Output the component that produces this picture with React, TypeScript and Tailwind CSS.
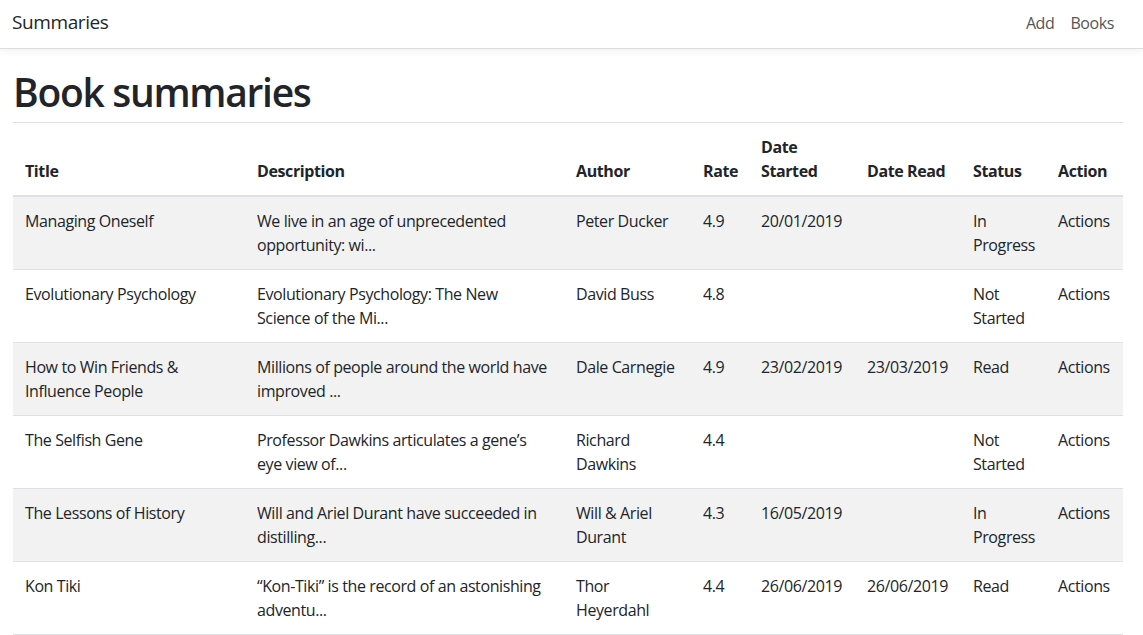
import React from "react";

type Book = {
  title: string;
  description: string;
  author: string;
  rate: string;
  dateStarted: string;
  dateRead: string;
  status: string;
};

const books: Book[] = [
  {
    title: "Managing Oneself",
    description: "We live in an age of unprecedented opportunity: wi...",
    author: "Peter Ducker",
    rate: "4.9",
    dateStarted: "20/01/2019",
    dateRead: "",
    status: "In Progress",
  },
  {
    title: "Evolutionary Psychology",
    description: "Evolutionary Psychology: The New Science of the Mi...",
    author: "David Buss",
    rate: "4.8",
    dateStarted: "",
    dateRead: "",
    status: "Not Started",
  },
  {
    title: "How to Win Friends & Influence People",
    description: "Millions of people around the world have improved ...",
    author: "Dale Carnegie",
    rate: "4.9",
    dateStarted: "23/02/2019",
    dateRead: "23/03/2019",
    status: "Read",
  },
  {
    title: "The Selfish Gene",
    description: "Professor Dawkins articulates a gene\u2019s eye view of...",
    author: "Richard Dawkins",
    rate: "4.4",
    dateStarted: "",
    dateRead: "",
    status: "Not Started",
  },
  {
    title: "The Lessons of History",
    description: "Will and Ariel Durant have succeeded in distilling...",
    author: "Will & Ariel Durant",
    rate: "4.3",
    dateStarted: "16/05/2019",
    dateRead: "",
    status: "In Progress",
  },
  {
    title: "Kon Tiki",
    description: "\u201cKon-Tiki\u201d is the record of an astonishing adventu...",
    author: "Thor Heyerdahl",
    rate: "4.4",
    dateStarted: "26/06/2019",
    dateRead: "26/06/2019",
    status: "Read",
  },
];

const App: React.FC = () => {
  return (
    <div className="min-h-screen bg-white text-[#212529] font-['Open_Sans',sans-serif] text-[16px] leading-6 tracking-[-0.4px]">
      <nav className="h-[49px] flex items-center justify-between pl-3 pr-[29px] pb-[3px] border-b border-[#dcdcdc] shadow-[0_2px_8px_rgba(0,0,0,0.06)]">
        <a className="text-[19px] text-[#212529] leading-none">Summaries</a>
        <div className="flex gap-4 text-[#555]">
          <a>Add</a>
          <a>Books</a>
        </div>
      </nav>

      <div className="pl-[13px] pr-[20px]">
        <h1 className="mt-[19px] text-[39px] leading-[48px] font-semibold tracking-[-1.3px]">Book summaries</h1>
        <hr className="mt-[6px] border-t border-[#dee2e6]" />

        <table className="w-full table-fixed border-collapse text-left">
          <colgroup>
            <col className="w-[232px]" />
            <col className="w-[319px]" />
            <col className="w-[127px]" />
            <col className="w-[58px]" />
            <col className="w-[106px]" />
            <col className="w-[106px]" />
            <col className="w-[85px]" />
            <col className="w-[77px]" />
          </colgroup>
          <thead>
            <tr className="border-b-2 border-[#dee2e6]">
              <th className="p-3 align-bottom font-bold">Title</th>
              <th className="p-3 align-bottom font-bold">Description</th>
              <th className="p-3 align-bottom font-bold">Author</th>
              <th className="p-3 align-bottom font-bold">Rate</th>
              <th className="p-3 align-bottom font-bold">Date Started</th>
              <th className="p-3 align-bottom font-bold">Date Read</th>
              <th className="p-3 align-bottom font-bold">Status</th>
              <th className="p-3 align-bottom font-bold">Action</th>
            </tr>
          </thead>
          <tbody>
            {books.map((book, index) => (
              <tr
                key={index}
                className={"border-b border-[#dee2e6] " + (index % 2 === 0 ? "bg-[#f2f2f2]" : "bg-white")}
              >
                <td className="p-3 align-top">{book.title}</td>
                <td className="p-3 align-top">{book.description}</td>
                <td className="p-3 align-top">{book.author}</td>
                <td className="p-3 align-top">{book.rate}</td>
                <td className="p-3 align-top">{book.dateStarted}</td>
                <td className="p-3 align-top">{book.dateRead}</td>
                <td className="p-3 align-top">{book.status}</td>
                <td className="p-3 align-top">Actions</td>
              </tr>
            ))}
          </tbody>
        </table>
      </div>
    </div>
  );
};

export default App;
